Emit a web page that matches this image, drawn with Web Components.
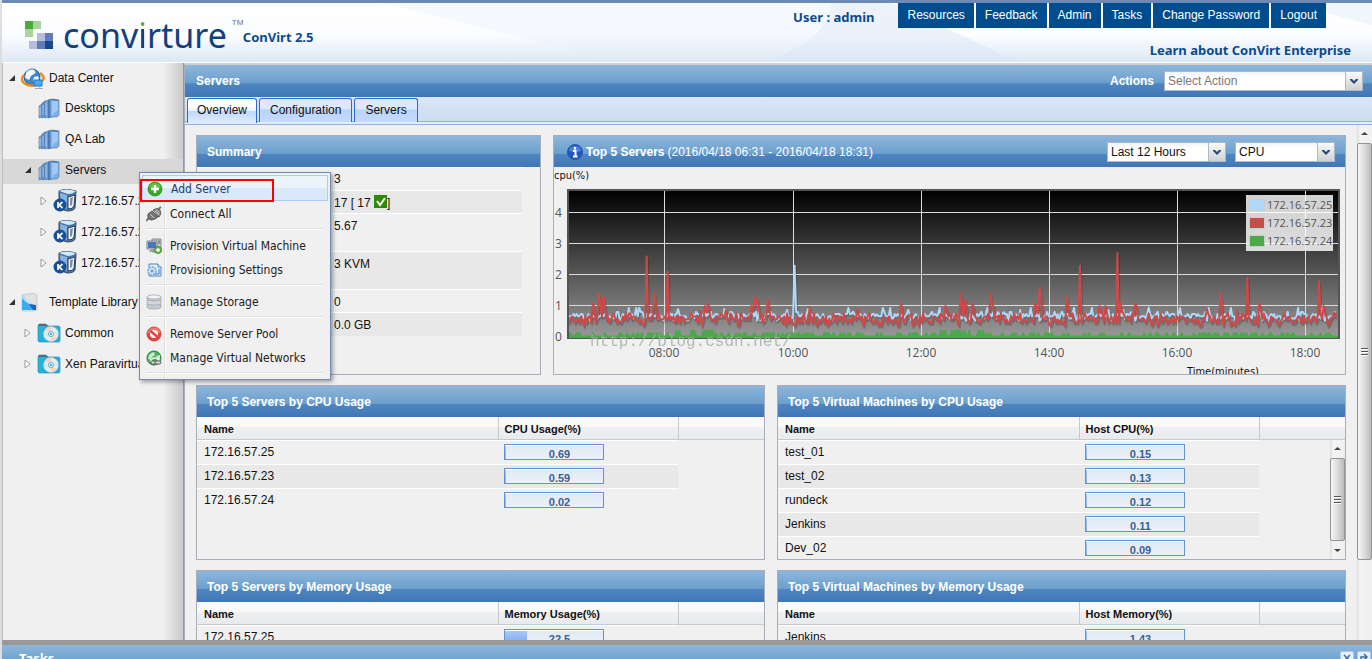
<!DOCTYPE html>
<html lang="en">
<head>
<meta charset="utf-8">
<title>ConVirt 2.5</title>
<style>
html,body{margin:0;height:100%;overflow:hidden;font:12px/16px "Liberation Sans",Arial,sans-serif;color:#111}
</style>
</head>
<body>
<cv-app></cv-app>
<script>
const BAR='linear-gradient(#8fb6da 0,#6a9fcd 57%,#4f86c1 58%,#3f76b6 100%)';
const TAHOMA='"DejaVu Sans Condensed","DejaVu Sans",sans-serif';
function define(name,css,html,setup){
  customElements.define(name,class extends HTMLElement{
    constructor(){
      super();
      const root=this.attachShadow({mode:'open'});
      root.innerHTML='<style>*{box-sizing:border-box}'+css+'</style>'+(typeof html==='function'?'':html);
    }
    connectedCallback(){
      if(this.ready)return;
      this.ready=true;
      if(typeof html==='function')this.shadowRoot.innerHTML+=html(this);
      if(setup)setup(this,this.shadowRoot);
    }
  });
}

/* icons */
const ICONS={
globe:`<svg viewBox="0 0 24 24" width="24" height="24"><circle cx="11" cy="11" r="8" fill="#3e86c4" stroke="#2b6294"/><path d="M5 7q4-4 8-3l1 3-4 3-2 4-4-2zM13 11l4-1 1 3-3 4-3-2z" fill="#e9f5ff"/><ellipse cx="10" cy="6" rx="5" ry="3" fill="#fff" opacity=".5"/><path d="M3 9Q-1 14 3 17Q8 21 15 19M19 7Q25 11 21 15" fill="none" stroke="#ee8a1d" stroke-width="2.500"/><path d="M13 14h8v6h-8z" fill="#46a8ee" stroke="#1f78c4"/><path d="M16 20h3v2h-5v1h8v-1h-3" fill="#9ab"/></svg>`,
pool:`<svg viewBox="0 0 24 22" width="24" height="22"><g stroke="#4572aa" stroke-width=".6"><path d="M2 9l3-2v13l-3 1z" fill="#7fa5d4"/><path d="M5 6l3-2v16l-3 1z" fill="#6b97cc"/><path d="M8 4l4-1v17l-4 1z" fill="#7faadb"/><path d="M11 3l4-1v18l-4 1z" fill="#4f7fb9"/><path d="M13 3l3-1 6 1v15l-2 2h-7z" fill="#80b0ea"/></g><path d="M15 4l6 0v9q-4 2-6 6z" fill="#a9cdf8" opacity=".8"/><path d="M13 3l3-1 6 1-2 1z" fill="#54789f"/><path d="M3 10v8M6 8v10M9 6v12" stroke="#b3d0f0" stroke-width=".8"/></svg>`,
host:`<svg viewBox="0 0 24 26" width="24" height="26"><path d="M6 3q6-3 17 0l-1 17q-1 3-8 3l-8-3z" fill="#4d76a8" stroke="#34495f"/><path d="M6 3q6-3 17 0-3 3-8 3z" fill="#cfeaf8"/><path d="M7 5l7 2v14l-6-2z" fill="#86b3e2"/><path d="M15 9l7-2-1 11q-1 3-6 3z" fill="#f3f6f9" stroke="#2d3d50"/><path d="M17 10l3-1-1 8-2 1z" fill="#7a8ea8"/><circle cx="7" cy="17" r="6.500" fill="#174f94"/><path d="M5 14v6M9.500 14L6 17l3.500 3" fill="none" stroke="#fff" stroke-width="1.700"/></svg>`,
library:`<svg viewBox="0 0 20 20" width="20" height="20"><path d="M1 3l12-2 3 2v15l-3 1H1z" fill="#dfe1e4" stroke="#b4b8bd" stroke-width=".6"/><path d="M1 3l2 0q1 7 11 10v5l-13 0z" fill="#a8dcfa"/><path d="M1 6q4 6 13 8v4H1z" fill="#3cabec"/><path d="M8 12l7 1v5h-3z" fill="#1e64b5"/></svg>`,
folder:`<svg viewBox="0 0 24 20" width="24" height="20"><path d="M1 3l1-2h7l2 2h11l1 1v14l-1 1H2l-1-1z" fill="#27b3d9" stroke="#168caf" stroke-width=".6"/><path d="M1 3l1-2h7l2 2z" fill="#5d6b72"/><circle cx="14" cy="11" r="7.500" fill="#e9ebee" stroke="#b6bec6" stroke-width=".6"/><path d="M14 11L8 7q3-4 6-3zM14 11l6 4q-3 4-6 3z" fill="#fbd3c6"/><path d="M14 11l7-4v5zM14 11l-7 4v-5z" fill="#cfeaf8"/><circle cx="14" cy="11" r="2.500" fill="#fff" stroke="#4cb4dd"/><circle cx="14" cy="11" r="1" fill="#188ed0"/></svg>`,
add:`<svg viewBox="0 0 16 16" width="16" height="16"><circle cx="8" cy="8" r="7" fill="#2faa1c" stroke="#1d8a10" stroke-width=".7"/><path d="M2 7q1-5 6-5t6 5z" fill="#72cf52" opacity=".7"/><path d="M8 4v8M4 8h8" stroke="#fff" stroke-width="2.500"/></svg>`,
plug:`<svg viewBox="0 0 16 16" width="16" height="16"><path d="M0 15l4-4M10 5l5-4" stroke="#777" stroke-width="2"/><path d="M2 8l4-3 6 6-3 2q-4 2-6 0t-1-5z" fill="#777" stroke="#444" stroke-width=".8"/><path d="M7 4q4-3 7 0 2 4-1 7z" fill="#999" stroke="#444" stroke-width=".8"/><path d="M4 8l4 4M9 5l4 4" stroke="#ccc"/></svg>`,
vm:`<svg viewBox="0 0 16 16" width="16" height="16"><path d="M6 1h9v13H6z" fill="#c4c9cf" stroke="#888"/><path d="M12 3h2M12 5h2" stroke="#666"/><path d="M1 3h10v8H1z" fill="#d9dde2" stroke="#7b8087"/><path d="M2 4h8v6H2z" fill="#4a76bb"/><path d="M4 12h4l1 2H3z" fill="#9aa0a8"/><circle cx="12" cy="12" r="3.500" fill="#6aba50" stroke="#2f7f1d" stroke-width=".7"/><path d="M12 10v4M10 12h4" stroke="#fff" stroke-width="1.300"/></svg>`,
settings:`<svg viewBox="0 0 16 16" width="16" height="16"><path d="M3 2h9l3 3v9H3z" fill="#e4effb" stroke="#4e82bd"/><path d="M12 2v3h3" fill="#fff" stroke="#4e82bd"/><circle cx="6" cy="9" r="4" fill="#d5e6f8" stroke="#86aedc" stroke-width="2" stroke-dasharray="2 1"/><circle cx="6" cy="9" r="1.500" fill="#6e9acb"/><path d="M13 7v5H9" stroke="#3f78bb" fill="none"/></svg>`,
disk:`<svg viewBox="0 0 16 16" width="16" height="16"><g fill="#c5cbd2" stroke="#98a0a8" stroke-width=".7"><path d="M1 10v3q0 2 7 2t7-2v-3z"/><path d="M1 6v3q0 2 7 2t7-2V6z" fill="#d5d9de"/><path d="M1 3v2q0 2 7 2t7-2V3z"/></g><ellipse cx="8" cy="3" rx="7" ry="2" fill="#f1f3f5" stroke="#9aa1a9" stroke-width=".7"/></svg>`,
remove:`<svg viewBox="0 0 16 16" width="16" height="16"><circle cx="8" cy="8" r="7" fill="#e2453c" stroke="#c9413a"/><path d="M1.500 7q1-5 6.500-5.500T14.500 7z" fill="#f79189" opacity=".7"/><circle cx="8" cy="8" r="4" fill="#f6f6f6"/><path d="M4.500 5L11.500 11" stroke="#e2453c" stroke-width="2.500"/></svg>`,
network:`<svg viewBox="0 0 16 16" width="16" height="16"><circle cx="8" cy="8" r="7" fill="#4fae60" stroke="#2b7c40"/><path d="M3 5q3-3 5-3l1 3-3 2-1 3-3-1zM10 6l4-1v5l-3-1z" fill="#c5ebc9"/><path d="M5 12q0-4 4-4 3 0 4 3" fill="none" stroke="#eee" stroke-width="1.500"/><rect x="5" y="11" width="5" height="3" rx="1.500" fill="#ddd" stroke="#555"/><rect x="9" y="11" width="6" height="3" rx="1.500" fill="#ddd" stroke="#555"/></svg>`,
info:`<svg viewBox="0 0 16 16" width="16" height="16"><circle cx="8" cy="8" r="7.500" fill="#2057c8" stroke="#2d55ac"/><path d="M2 7q1-5 6-5t6 5q-6 2-12 0z" fill="#6d9bee" opacity=".6"/><path d="M8 3v2.500M6 7h2.500v5M6 12.500h4.500" fill="none" stroke="#fff" stroke-width="2"/></svg>`,
check:`<svg viewBox="0 0 13 13" width="13" height="13"><path d="M0 0h13v13H0z" fill="#2f8a0c"/><path d="M3 6l3 4 5-7" fill="none" stroke="#fff" stroke-width="2"/></svg>`
};
define('cv-icon',':host{display:block;flex:none}svg{display:block}',el=>ICONS[el.getAttribute('name')]);

/* header */
define('cv-header',`
:host{display:block;position:relative;flex:none;height:63px;border-top:3px solid #6c8ab3;border-bottom:1px solid #fff;overflow:hidden;
 background:linear-gradient(#fff 0,#fcfdff 55%,#dce7f5 100%)}
.wave{position:absolute;inset:0;width:100%;height:100%}
.in{position:relative;display:flex;align-items:flex-start;height:100%}
.brand{display:flex;flex:1;padding-left:21px}
.mark{margin-top:18px;flex:none}
h1{margin:9px 0 0 10px;font:34px/46px "Noto Sans","Open Sans",sans-serif;color:#12407c}
h1 i{font-style:normal;background:linear-gradient(#4cae3e 16px,#12407c 16px);-webkit-background-clip:text;background-clip:text;color:transparent}
sup{width:16px;font:8px/10px "Liberation Sans",sans-serif;color:#5c7192;margin:15px 0 0 5px}
.ver,.user,.learn{font:bold 13px/16px "Noto Sans","Open Sans",sans-serif;color:#0b4a8c;text-decoration:none;white-space:nowrap}
.ver{margin:26px 0 0 -5px}
.right{display:flex;flex-direction:column;align-items:flex-end;padding-right:21px}
.top{display:flex;align-items:flex-start;padding-right:25px}
.user{margin:6px 24px 0 0}
nav{display:flex;gap:2px}
nav a{background:#004c8c;color:#fff;font-size:12px;line-height:25px;padding:0 9px;text-decoration:none}
.learn{margin-top:14px}
`,`
<svg class="wave" viewBox="0 0 1372 59" preserveAspectRatio="none"><path d="M380 0H830Q830 35 765 59H620z" fill="#e6effa" opacity=".3"/><path d="M830 0Q830 35 765 59H1018L945 25Q910 8 890 0z" fill="#d9e5f6" opacity=".5"/><path d="M1290 0h82v22z" fill="#e3edfa" opacity=".5"/></svg>
<div class="in"><div class="brand">
<svg class="mark" viewBox="0 0 30 30" width="30" height="30"><path d="M2 0h8v8H2z" fill="#46ab3b"/><path d="M10 0h8v8h-8zM2 8h8v8H2z" fill="#a9d29f"/><path d="M14 12h8v8h-8zM6 20h8v8H6z" fill="#b4bedc"/><path d="M14 20h8v8h-8zM22 12h8v8h-8z" fill="#5f7db4"/><path d="M22 20h8v8h-8z" fill="#17488f"/></svg>
<h1>conv<i>i</i>rture</h1><sup>TM</sup><span class="ver">ConVirt 2.5</span></div>
<div class="right"><div class="top"><span class="user">User : admin</span>
<nav><a href="#">Resources</a><a href="#">Feedback</a><a href="#">Admin</a><a href="#">Tasks</a><a href="#">Change Password</a><a href="#">Logout</a></nav></div>
<a class="learn" href="#">Learn about ConVirt Enterprise</a></div></div>`);

/* navigation tree */
define('cv-node',`
:host{display:flex;align-items:center;height:31px;padding-left:calc(var(--depth,0)*16px + 5px)}
:host([selected]){background:linear-gradient(transparent 5px,#d8d8d8 5px,#d8d8d8 30px,transparent 30px)}
.arrow{flex:none;width:8px;height:8px;margin-right:5px}
.box{display:flex;width:24px;margin-right:4px}
span{white-space:nowrap}
`,el=>{
 const s=el.getAttribute('state');
 const a=s==='open'?'<path d="M7 1v6H1z" fill="#333"/>':s==='closed'?'<path d="M1 0l5 4-5 4z" fill="#fff" stroke="#999"/>':'';
 return `<svg class="arrow" viewBox="0 0 8 8">${a}</svg><div class="box"><cv-icon name="${el.getAttribute('icon')}"></cv-icon></div><span><slot></slot></span>`;
});
define('cv-sidebar',`
:host{display:block;flex:none;width:182px;overflow:hidden;border-left:1px solid #bdbdbd;border-right:1px solid #999;background:linear-gradient(90deg,#f0f0f0 0,#f0f0f0 89%,#cbc9c9 100%)}
.first{height:29px}.lib{height:30px;margin-top:9px}
.d1{--depth:1}.d2{--depth:2}
`,`
<cv-node class="first" state="open" icon="globe">Data Center</cv-node>
<cv-node class="d1" icon="pool">Desktops</cv-node>
<cv-node class="d1" icon="pool">QA Lab</cv-node>
<cv-node class="d1" state="open" selected icon="pool">Servers</cv-node>
<cv-node class="d2" state="closed" icon="host">172.16.57.25</cv-node>
<cv-node class="d2" state="closed" icon="host">172.16.57.23</cv-node>
<cv-node class="d2" state="closed" icon="host">172.16.57.24</cv-node>
<cv-node class="lib" state="open" icon="library">Template Library</cv-node>
<cv-node class="d1" state="closed" icon="folder">Common</cv-node>
<cv-node class="d1" state="closed" icon="folder">Xen Paravirtual</cv-node>`);

/* context menu */
define('cv-menu-item',`
:host{display:block}
button{display:flex;align-items:center;width:100%;height:24px;border:0;padding:2px 0 0 4px;background:none;font:12px/16px ${TAHOMA};color:#222;text-align:left;white-space:nowrap}
cv-icon{margin-right:8px}
:host([active]) button{height:26px;border:1px solid #aaccf6;background:linear-gradient(#ebf3fd 50%,#d9e8fb 50%);color:#233d6d}
`,el=>`<button type="button" role="menuitem"><cv-icon name="${el.getAttribute('icon')}"></cv-icon><slot></slot></button>`);
define('cv-menu',`
:host{display:block;width:192px;padding:2px;border:1px solid #718bb7;box-shadow:2px 2px 4px rgba(0,0,0,.35);
 background:linear-gradient(90deg,#f0f0f0 24px,#dedede 24px,#dedede 25px,#fff 25px,#fff 26px,#f0f0f0 26px)}
hr{margin:3px 4px;height:2px;border:0;border-top:1px solid #dedede;background:#fff}
.mark{position:absolute;left:0;top:6px;width:134px;height:23px;border:2px solid #f00;pointer-events:none}
`,`
<div role="menu">
<cv-menu-item active icon="add">Add Server</cv-menu-item>
<cv-menu-item icon="plug">Connect All</cv-menu-item><hr>
<cv-menu-item icon="vm">Provision Virtual Machine</cv-menu-item>
<cv-menu-item icon="settings">Provisioning Settings</cv-menu-item><hr>
<cv-menu-item icon="disk">Manage Storage</cv-menu-item><hr>
<cv-menu-item icon="remove">Remove Server Pool</cv-menu-item>
<cv-menu-item icon="network">Manage Virtual Networks</cv-menu-item><hr>
</div><div class="mark"></div>`);

/* drop-down */
define('cv-select',`
:host{display:block;position:relative;height:20px;width:var(--w,119px)}
select{appearance:none;width:100%;height:100%;margin:0;padding:0 20px 0 3px;border:1px solid #b0b8c8;border-radius:0;background:linear-gradient(#f0f2f4,#fff 5px);font:12px/16px "Liberation Sans",Arial,sans-serif;color:var(--ink,#111)}
svg{position:absolute;right:1px;top:1px;pointer-events:none}
`,el=>`<select aria-label="${el.getAttribute('label')}"><option>${el.getAttribute('value')}</option></select>
<svg viewBox="0 0 17 18" width="17" height="18"><defs><linearGradient id="g" x2="0" y2="1"><stop stop-color="#fafafa"/><stop offset="1" stop-color="#cfd0d2"/></linearGradient></defs><path d="M0 0h17v18H0z" fill="url(#g)"/><path d="M.5 0v18" stroke="#b0b8c8"/><path d="M5 7h2l2 2 2-2h2v1l-4 4-4-4z" fill="#28497e"/></svg>`);

/* scroll bar */
define('cv-scrollbar',`
:host{display:flex;flex-direction:column;flex:none;width:15px;background:linear-gradient(90deg,#dcdcdc 0,#f4f4f4 3px,#efefef 100%)}
svg{display:block;flex:none;width:15px;height:18px}
.thumb{display:flex;flex-direction:column;justify-content:center;align-items:center;flex:var(--thumb,1) 1 0;border:1px solid #939393;border-radius:2px;background:linear-gradient(90deg,#f6f6f6,#dcdcdc 50%,#bcbcbc)}
.thumb i{width:7px;height:2px;margin:1px 0 0;background:linear-gradient(#555 50%,#fff 50%)}
.rest{flex:var(--rest,0) 1 0}
`,el=>`<svg viewBox="0 0 15 18"><path d="M4 10l3.500-3 3.500 3z" fill="#444"/></svg><div class="thumb"><i></i><i></i><i></i></div><div class="rest"></div>${el.hasAttribute('down')?'<svg viewBox="0 0 15 18"><path d="M4 8l3.500 3L11 8z" fill="#444"/></svg>':''}`);

/* panel */
define('cv-panel',`
:host{display:flex;flex-direction:column;min-width:0;border:1px solid #a9adb8;overflow:hidden}
header{display:flex;align-items:center;flex:none;height:31px;padding:0 10px;color:#fff;background:${BAR}}
h2{margin:0;flex:1;font-size:12px;line-height:16px;display:flex;align-items:center;white-space:nowrap}
`,el=>`<header><h2><slot name="icon"></slot>${el.getAttribute('heading')}<slot name="note"></slot></h2><slot name="tools"></slot></header><slot></slot>`);

/* usage meter and usage table */
define('cv-meter',`
:host{display:block;width:100px;height:16px;border:1px solid #6593cf;box-shadow:inset 0 1px #fff;text-align:center;overflow:hidden;
 background:linear-gradient(#a9cafb,#80aaee) 0 0/var(--fill) 100% no-repeat,linear-gradient(#e0e8f3,#eaf1f9);font:bold 11px/18px "Liberation Sans",Arial,sans-serif;color:#396095}
span{display:block;padding-left:11px}
`,el=>{el.style.setProperty('--fill',Math.max(1,parseFloat(el.getAttribute('value')))+'%');return `<span>${el.getAttribute('value')}</span>`});
define('cv-usage',`
:host{display:flex;flex-direction:column;flex:1;min-height:0}
table{border-collapse:collapse;table-layout:fixed;width:100%;flex:none}
th{height:22px;padding:3px 0 0 6px;text-align:left;font-size:11px;line-height:16px;border-right:1px solid #c8c9cb;border-bottom:1px solid #c8c9cb;background:linear-gradient(#f9f9f9 45%,#eff0f2 46%,#e8eaed)}
th:first-child,td:first-child{padding-left:7px}
th:last-child{border-right:0}
.a{width:301px}.b{width:180px}
.scroll{display:flex;flex:1;min-height:0}
.rows{flex:1;min-width:0;overflow:hidden}
td{height:24px;padding:0 0 0 6px;vertical-align:middle;line-height:16px}
tr.r td:not(:last-child){border-top:1px solid #fff}
tr.r:nth-child(even) td:not(:last-child){background:#e8e8e8}
`,el=>{
 const rows=el.getAttribute('rows').split(';').map(r=>r.split('='));
 const cols='<colgroup><col class="a"><col class="b"><col></colgroup>';
 return `<table>${cols}<thead><tr><th>Name</th><th>${el.getAttribute('metric')}</th><th></th></tr></thead></table>
 <div class="scroll"><div class="rows"><table>${cols}<tbody>${rows.map(([n,v])=>`<tr class="r"><td>${n}</td><td><cv-meter value="${v}"></cv-meter></td><td></td></tr>`).join('')}</tbody></table></div>${el.hasAttribute('scroll')?'<cv-scrollbar down></cv-scrollbar>':''}</div>`;
});

/* summary */
define('cv-summary',`
:host{display:block}
table{border-collapse:collapse;width:calc(100% - 18px)}
th{width:131px}
td{height:23px;padding:4px 0 0 6px;vertical-align:top;line-height:16px;border-top:1px solid #fff}
th{border-top:1px solid #fff}
tr:first-child td{padding-top:3px}
tr:nth-child(even){background:#e8e8e8}
.tall td{height:38px}
.c{display:flex}
`,`<table>
<tr><th></th><td>3</td></tr>
<tr><th></th><td><div class="c">17 [ 17&nbsp;<cv-icon name="check"></cv-icon>]</div></td></tr>
<tr class="tall"><th></th><td>5.67</td></tr>
<tr class="tall"><th></th><td>3 KVM</td></tr>
<tr><th></th><td>0</td></tr>
<tr><th></th><td>0.0 GB</td></tr></table>`);

/* CPU history chart */
define('cv-chart',`
:host{display:block}
svg{display:block;width:100%;font-family:"Open Sans","Noto Sans",sans-serif}
.tick{font-size:12px;fill:#545454}.name{font-size:11px;fill:#545454}
.axis{font:11px ${TAHOMA};fill:#111}
.wm{font:16px "Liberation Mono",monospace;fill:#a8a8a8;opacity:.8}
`,()=>{
 const X0=15,Y0=170,U=31;
 let seed=7;
 const rnd=()=>(seed=(seed*16807)%2147483647)/2147483647;
 const N=514,W=768;
 const series=(base,amp,spikes)=>{
  const v=Array.from({length:N},()=>base+Math.round((rnd()+rnd()-1)*2.4)*amp+(rnd()<.04?.2:0));
  spikes.forEach(([x,h])=>{const i=Math.round((x-569)/W*N);v[i]=h;if(h<1.7&&v[i+1]!==undefined)v[i+1]=h*.8;});
  return v.map((h,i)=>(X0+i*W/N).toFixed(1)+','+(Y0-h*U).toFixed(1)).join(' ');
 };
 const blue=series(.67,.07,[[794,2.3],[808,.9],[678,.9],[724,.9],[1148,.95]]);
 const red=series(.56,.1,[[593,1.1],[599,1.4],[604,1.3],[646,2.6],[654,1.4],[668,2.1],[705,1],[708,1.1],[751,1],[754,1.3],[758,1.2],[768,1.2],[858,.9],[900,1.1],[946,1],[960,1.4],[965,1.2],[972,1.1],[990,1.4],[1035,1.1],[1039,1.6],[1066,1.3],[1080,2.3],[1100,1],[1105,1],[1118,2.7],[1120,1.1],[1136,1.1],[1207,.9],[1221,1.4],[1248,1.9],[1260,1.1],[1319,1.8],[1323,1],[1334,.8]]);
 const green=Array.from({length:N},(_,i)=>{const x=569+i*W/N;const hot=x>940&&x<984||x>676&&x<714;return (X0+i*W/N).toFixed(1)+','+(Y0-(rnd()<(hot?.5:.3)?(hot?.2:.12):.02)*U).toFixed(1)}).join(' ');
 const vs=[110,239,367,495,623,751];
 const hrs=['08:00','10:00','12:00','14:00','16:00','18:00'];
 return `<svg viewBox="0 0 791 207">
 <defs><linearGradient id="bg" x2="0" y2="1"><stop stop-color="#000"/><stop offset="1" stop-color="#999"/></linearGradient><clipPath id="cp"><path d="M15 23h769v150H15z"/></clipPath></defs>
 <text class="axis" x="0" y="12">cpu(%)</text>
 <path d="M14 23h771v148H14z" fill="url(#bg)" stroke="#545454" stroke-width="2"/>
 <g stroke="#dcdcdc">${[1,2,3,4].map(n=>`<path d="M15 ${Math.round(Y0-n*U)-.5}H784"/>`).join('')}${vs.map(x=>`<path d="M${x+.5} 24V170"/>`).join('')}</g>
 ${[0,1,2,3,4].map(n=>`<text class="tick" x="1" y="${Y0-n*U+4}">${n}</text>`).join('')}
 <g fill="none" stroke-width="2" stroke-linejoin="round" clip-path="url(#cp)">
 <g stroke="#000" opacity=".2" transform="translate(1 2)"><polyline points="${blue}"/><polyline points="${red}"/></g>
 <polyline points="${blue}" stroke="#afd8f8"/><polyline points="${red}" stroke="#cb4b4b"/>
 <polygon points="${X0},${Y0} ${green} 783,${Y0}" fill="#4da74d" stroke="#4da74d"/></g>
 <path d="M692 28h87v56h-87z" fill="#fff" opacity=".82"/>
 ${[['#afd8f8',25],['#cb4b4b',23],['#4da74d',24]].map(([c,n],i)=>`<path d="M696 ${33+i*18}h14v10h-14z" fill="${c}" /><path d="M695.500 ${32.5+i*18}h15v11h-15z" fill="none" stroke="#ccc"/><text class="name" x="713" y="${42+i*18}">172.16.57.${n}</text>`).join('')}
 <text class="wm" x="36" y="179">http://blog.csdn.net/</text>
 ${hrs.map((h,i)=>`<text class="tick" text-anchor="middle" x="${vs[i]}" y="190">${h}</text>`).join('')}
 <text class="axis" x="633" y="208">Time(minutes)</text></svg>`;
});

/* tabs */
define('cv-tabs',`
:host{display:flex;flex:none;gap:2px;height:28px;padding:1px 2px 0;border-bottom:1px solid #8db2e3;background:linear-gradient(transparent 24px,#8db2e3 24px,#8db2e3 25px,#deecfd 25px),linear-gradient(#dbe6f6,#cbdbef)}
button{height:24px;padding:0 10px 2px;border:1px solid #2f6ad0;border-bottom:0;border-radius:3px 3px 0 0;background:linear-gradient(#dce9fd 45%,#b9d3fa 46%,#c4dbfd);font:12px/20px "Liberation Sans",Arial,sans-serif;color:#111}
.on{height:25px;padding:0 9px 3px;background:linear-gradient(#fff 30%,#e9f2ff 50%,#c0d8fd 51%,#deecfd)}
`,`<button type="button" class="on">Overview</button><button type="button">Configuration</button><button type="button">Servers</button>`);

/* dashboard */
define('cv-dashboard',`
:host{display:flex;flex-direction:column;flex:1;min-width:0;border-top:2px solid #cfcfcf;border-left:1px solid #a9b0bd}
.head{display:flex;align-items:center;flex:none;height:32px;padding:0 9px 0 11px;color:#fff;background:${BAR};font-weight:bold}
.head h2{flex:1;margin:0;font-size:12px;line-height:16px}
.head cv-select{--w:199px;--ink:#777;margin-left:10px}
.body{display:flex;flex:1;min-height:0;background:#f0f0f0}
.grid{flex:1;min-width:0;overflow:hidden;padding:10px 11px 0 11px}
.row{display:grid;gap:12px;margin-bottom:10px}
.r1{grid-template-columns:345fr 793fr;height:240px}
.r2{grid-template-columns:1fr 1fr;height:175px}
.note{font-weight:normal;margin-left:3px}
.tools{display:flex;gap:9px}
cv-scrollbar{--thumb:417;--rest:80}
.info{margin:0 3px}
`,`
<div class="head"><h2>Servers</h2><span>Actions</span><cv-select label="Actions" value="Select Action"></cv-select></div>
<cv-tabs></cv-tabs>
<div class="body"><div class="grid">
<div class="row r1"><cv-panel heading="Summary"><cv-summary></cv-summary></cv-panel>
<cv-panel heading="Top 5 Servers"><cv-icon slot="icon" class="info" name="info"></cv-icon><span slot="note" class="note">(2016/04/18 06:31 - 2016/04/18 18:31)</span>
<div slot="tools" class="tools"><cv-select label="Period" value="Last 12 Hours"></cv-select><cv-select style="--w:100px" label="Metric" value="CPU"></cv-select></div><cv-chart></cv-chart></cv-panel></div>
<div class="row r2"><cv-panel heading="Top 5 Servers by CPU Usage"><cv-usage metric="CPU Usage(%)" rows="172.16.57.25=0.69;172.16.57.23=0.59;172.16.57.24=0.02"></cv-usage></cv-panel>
<cv-panel heading="Top 5 Virtual Machines by CPU Usage"><cv-usage scroll metric="Host CPU(%)" rows="test_01=0.15;test_02=0.13;rundeck=0.12;Jenkins=0.11;Dev_02=0.09"></cv-usage></cv-panel></div>
<div class="row r2"><cv-panel heading="Top 5 Servers by Memory Usage"><cv-usage metric="Memory Usage(%)" rows="172.16.57.25=22.5"></cv-usage></cv-panel>
<cv-panel heading="Top 5 Virtual Machines by Memory Usage"><cv-usage metric="Host Memory(%)" rows="Jenkins=1.43"></cv-usage></cv-panel></div>
</div><cv-scrollbar></cv-scrollbar></div>`);

/* task strip */
define('cv-taskbar',`
:host{display:block;flex:none;height:19px;overflow:hidden;border-top:5px solid #999}
.bar{display:flex;align-items:center;height:32px;padding:0 1px 6px 17px;background:${BAR};color:#fff}
h2{flex:1;margin:0;font:bold 13px/16px "Noto Sans","Open Sans",sans-serif}
button{width:14px;height:14px;margin:0 0 0 3px;padding:0;border:1px solid #a9c8ec;border-radius:2px;background:#e6f0fb}
svg{display:block}
`,`<div class="bar"><h2>Tasks</h2>
<button type="button" aria-label="Clear"><svg viewBox="0 0 12 12" width="12" height="12"><path d="M3 3l6 6M9 3L3 9" stroke="#3a6ea5" stroke-width="1.500"/></svg></button>
<button type="button" aria-label="Expand"><svg viewBox="0 0 12 12" width="12" height="12"><path d="M3 9V5h5M6 2l3 3-3 3" fill="none" stroke="#3a6ea5" stroke-width="1.500"/></svg></button></div>`);

define('cv-app',`
:host{display:flex;flex-direction:column;height:100vh;border-left:2px solid #dedede;box-sizing:border-box}
.mid{display:flex;flex:1;min-height:0}
cv-menu{position:absolute;left:139px;top:172px}
`,`<cv-header></cv-header><div class="mid"><cv-sidebar></cv-sidebar><cv-dashboard></cv-dashboard></div><cv-taskbar></cv-taskbar><cv-menu></cv-menu>`);
</script>
</body>
</html>
